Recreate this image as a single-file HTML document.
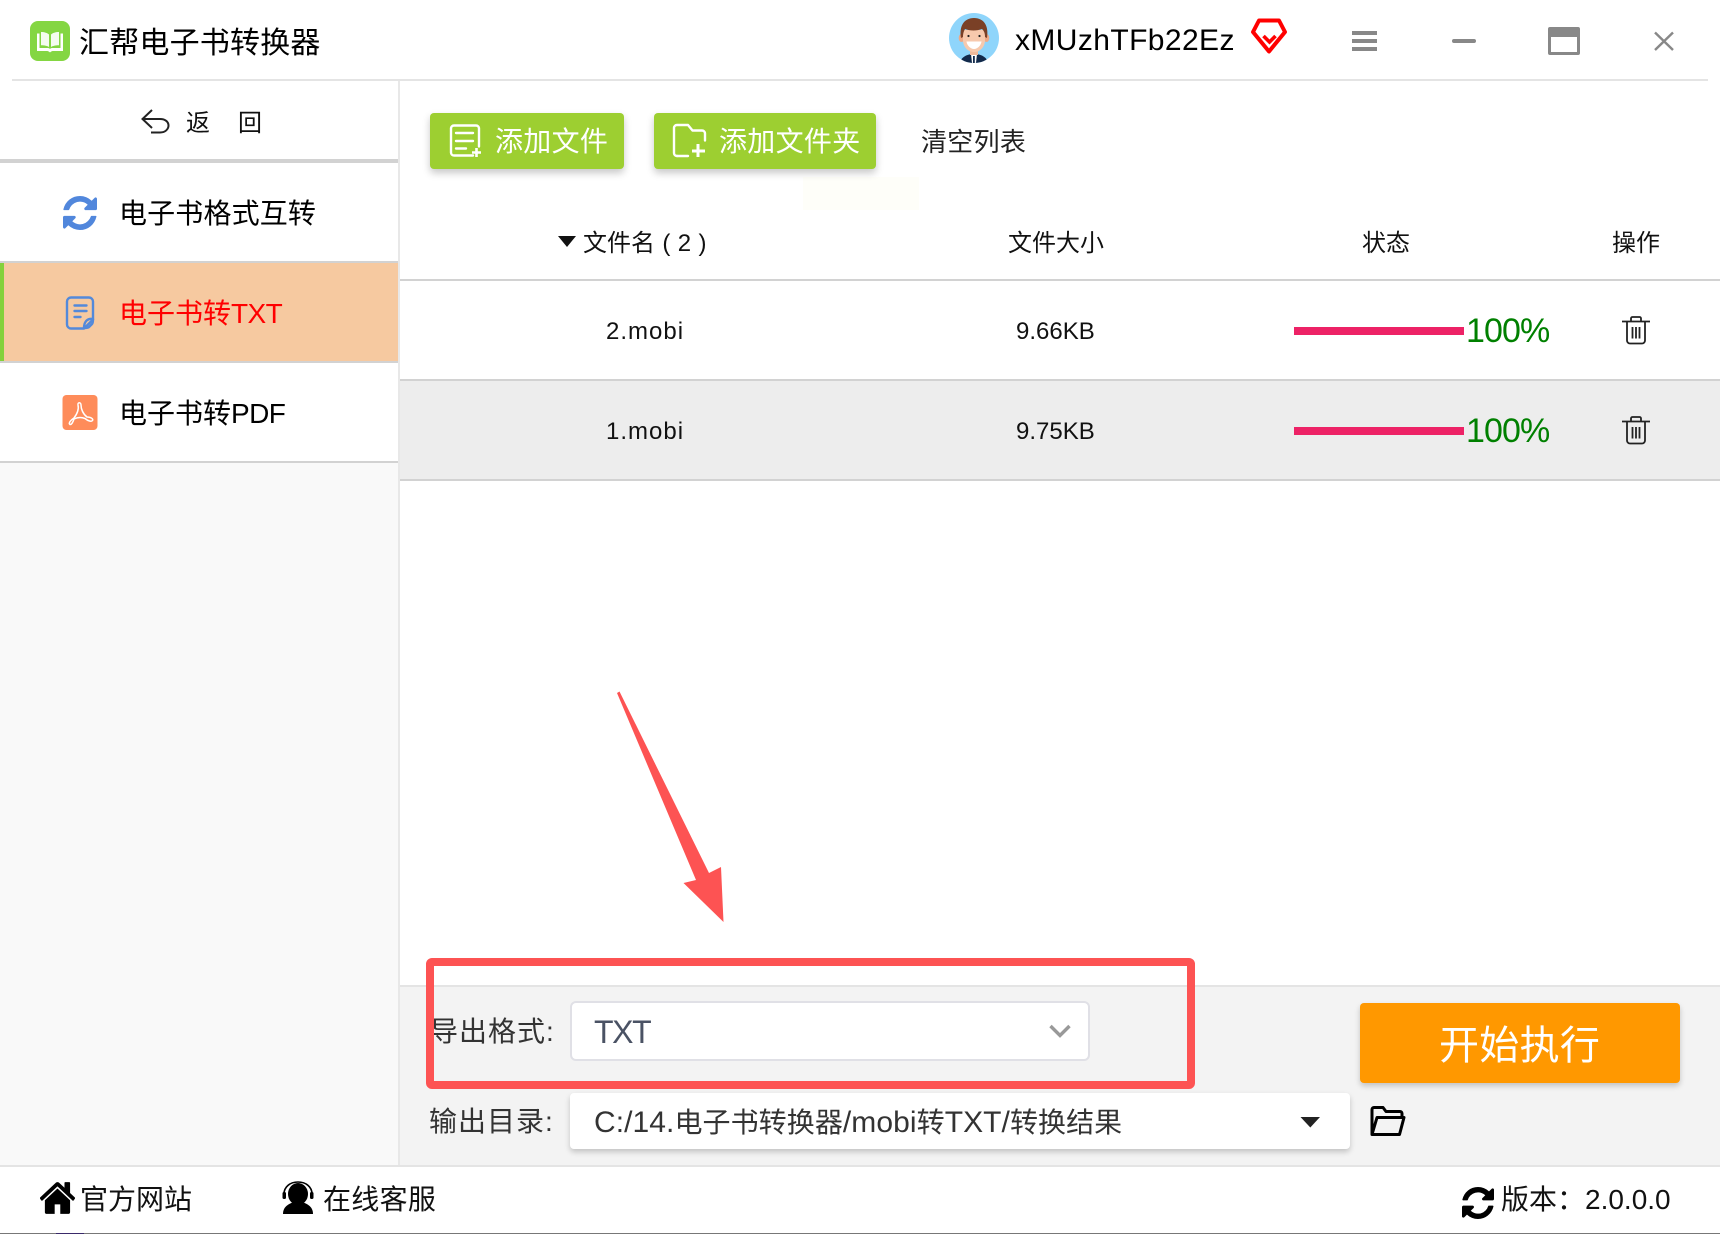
<!DOCTYPE html>
<html lang="zh-CN">
<head>
<meta charset="utf-8">
<title>汇帮电子书转换器</title>
<style>
html,body{margin:0;padding:0;width:1720px;height:1234px;overflow:hidden;background:#fff;}
body{position:relative;font-family:"Liberation Sans","Noto Sans CJK SC",sans-serif;color:#000;}
.a{position:absolute;}
.t{position:absolute;white-space:pre;height:40px;line-height:40px;}
.n{letter-spacing:-.6px}
.w{font-size:30px}
svg{position:absolute;left:0;top:0;}
</style>
</head>
<body>
<!-- backgrounds -->
<div class="a" style="left:12px;top:79px;width:1696px;height:2px;background:#e4e4e4"></div>
<div class="a" style="left:398px;top:81px;width:2px;height:1084px;background:#e8e8e8"></div>
<div class="a" style="left:0;top:463px;width:398px;height:702px;background:#f9f9f9"></div>
<div class="a" style="left:0;top:159px;width:398px;height:4px;background:#d2d2d2"></div>
<div class="a" style="left:0;top:261px;width:398px;height:2px;background:#d2d2d2"></div>
<div class="a" style="left:0;top:263px;width:398px;height:98px;background:#f6c9a0"></div>
<div class="a" style="left:0;top:263px;width:4px;height:98px;background:#84d13c"></div>
<div class="a" style="left:0;top:361px;width:398px;height:2px;background:#d2d2d2"></div>
<div class="a" style="left:0;top:461px;width:398px;height:2px;background:#d2d2d2"></div>

<div class="a" style="left:400px;top:279px;width:1320px;height:2px;background:#d2d2d2"></div>
<div class="a" style="left:400px;top:379px;width:1320px;height:2px;background:#d2d2d2"></div>
<div class="a" style="left:400px;top:381px;width:1320px;height:98px;background:#ededed"></div>
<div class="a" style="left:400px;top:479px;width:1320px;height:2px;background:#d2d2d2"></div>

<div class="a" style="left:803px;top:177px;width:116px;height:33px;background:#fefef9"></div>

<div class="a" style="left:400px;top:985px;width:1320px;height:180px;background:#f3f3f3;border-top:2px solid #e4e4e4;box-sizing:border-box"></div>
<div class="a" style="left:0;top:1165px;width:1720px;height:2px;background:#e4e4e4"></div>
<div class="a" style="left:0;top:1233px;width:1720px;height:1px;background:#777"></div>
<div class="a" style="left:56px;top:1233px;width:28px;height:1px;background:#3a2a6a"></div>

<!-- buttons -->
<div class="a" style="left:430px;top:113px;width:194px;height:56px;background:#9dcf31;border-radius:4px;box-shadow:0 4px 8px rgba(0,0,0,.22)"></div>
<div class="a" style="left:654px;top:113px;width:222px;height:56px;background:#9dcf31;border-radius:4px;box-shadow:0 4px 8px rgba(0,0,0,.22)"></div>
<div class="a" style="left:1360px;top:1003px;width:320px;height:80px;background:#ff9800;border-radius:4px;box-shadow:0 3px 6px rgba(0,0,0,.2)"></div>

<!-- selects -->
<div class="a" style="left:570px;top:1001px;width:520px;height:60px;box-sizing:border-box;background:#fff;border:2px solid #e0e0e6;border-radius:6px"></div>
<div class="a" style="left:570px;top:1093px;width:780px;height:56px;background:#fff;border-radius:4px;box-shadow:0 3px 6px rgba(0,0,0,.2)"></div>

<!-- text -->
<div class="t" style="left:79px;top:24px;font-size:30px;letter-spacing:.2px">汇帮电子书转换器</div>
<div class="t" style="left:186px;top:104px;font-size:24px;color:#111">返</div>
<div class="t" style="left:238px;top:104px;font-size:24px;color:#111">回</div>
<div class="t" style="left:1015px;top:21px;font-size:30px;letter-spacing:.4px">xMUzhTFb22Ez</div>

<div class="t" style="left:119px;top:194px;font-size:28px;letter-spacing:.15px">电子书格式互转</div>
<div class="t" style="left:119px;top:294px;font-size:28px;color:#ff0000">电子书转<span class="n">TXT</span></div>
<div class="t" style="left:119px;top:394px;font-size:28px">电子书转<span class="n">PDF</span></div>

<div class="t" style="left:495px;top:122px;font-size:28px;letter-spacing:.3px;color:#fff">添加文件</div>
<div class="t" style="left:719px;top:122px;font-size:28px;letter-spacing:.3px;color:#fff">添加文件夹</div>
<div class="t" style="left:921px;top:122px;font-size:26px;letter-spacing:.3px;color:#222">清空列表</div>

<div class="t" style="left:583px;top:224px;font-size:24px;color:#111">文件名<span style="word-spacing:.7px"> ( 2 )</span></div>
<div class="t" style="left:1008px;top:224px;font-size:24px;color:#111">文件大小</div>
<div class="t" style="left:1362px;top:224px;font-size:24px;color:#111">状态</div>
<div class="t" style="left:1612px;top:224px;font-size:24px;color:#111">操作</div>

<div class="t" style="left:606px;top:312px;font-size:24px;letter-spacing:1px;color:#111">2.mobi</div>
<div class="t" style="left:1016px;top:312px;font-size:24px;color:#111">9.66KB</div>
<div class="t" style="left:1466px;top:311px;font-size:34px;letter-spacing:-.9px;color:#008000">100%</div>
<div class="t" style="left:606px;top:412px;font-size:24px;letter-spacing:1px;color:#111">1.mobi</div>
<div class="t" style="left:1016px;top:412px;font-size:24px;color:#111">9.75KB</div>
<div class="t" style="left:1466px;top:411px;font-size:34px;letter-spacing:-.9px;color:#008000">100%</div>
<div class="a" style="left:1294px;top:327px;width:170px;height:8px;background:#ed2266"></div>
<div class="a" style="left:1294px;top:427px;width:170px;height:8px;background:#ed2266"></div>

<div class="t" style="left:430px;top:1012px;font-size:28px;letter-spacing:1px;color:#333">导出格式:</div>
<div class="t" style="left:429px;top:1102px;font-size:28px;letter-spacing:1px;color:#333">输出目录:</div>
<div class="t" style="left:594px;top:1012px;font-size:32px;letter-spacing:-1.400px;color:#4a5264">TXT</div>
<div class="t" style="left:594px;top:1103px;font-size:28px;letter-spacing:.07px;color:#333"><span class="w">C:/14.</span>电子书转换器<span class="w">/mobi</span>转<span class="w">TXT/</span>转换结果</div>
<div class="t" style="left:1439px;top:1026px;font-size:40px;letter-spacing:.3px;color:#fff">开始执行</div>

<div class="t" style="left:80px;top:1180px;font-size:28px;color:#111">官方网站</div>
<div class="t" style="left:323px;top:1180px;font-size:28px;letter-spacing:.3px;color:#111">在线客服</div>
<div class="t" style="left:1501px;top:1180px;font-size:28px;color:#111">版本：2.0.0.0</div>

<!-- overlay graphics -->
<svg width="1720" height="1234" viewBox="0 0 1720 1234" xmlns="http://www.w3.org/2000/svg">
  <!-- logo -->
  <rect x="30" y="21" width="40" height="40" rx="8" fill="#84d642"/>
  <path d="M37 33.500v17.500h10c1.500 0 2.500 1 3 1.500.5-.5 1.500-1.500 3-1.500h10V33.500h-2.500V48h-8c-1 0-2 .3-2.500 1-.5-.7-1.500-1-2.500-1h-8V33.500z" fill="#fff"/>
  <path d="M41 32c3.500 0 6.500 1 8 2.500V47c-1.500-1-4.500-1.700-8-1.700zM59 32c-3.500 0-6.500 1-8 2.500V47c1.500-1 4.500-1.700 8-1.700z" fill="#fff" opacity=".92"/>

  <!-- back arrow -->
  <path d="M152 110l-9.500 9 9.500 9M143 119h17c5.500 0 8.500 3 8.500 6.500s-3 7-8.500 7h-9" fill="none" stroke="#222" stroke-width="2"/>

  <!-- avatar -->
  <clipPath id="av"><ellipse cx="974" cy="38" rx="25" ry="25"/></clipPath>
  <g clip-path="url(#av)">
    <rect x="949" y="13" width="50" height="50" fill="#8fd5fb"/>
    <path d="M960 64c0-6 6-10 14-10s14 4 14 10z" fill="#12294a"/>
    <path d="M971 54h6l-1 9h-4z" fill="#fff"/>
    <rect x="973" y="56" width="1.800" height="7" fill="#12294a"/>
    <rect x="970" y="46" width="8" height="9" fill="#f0b99a"/>
    <ellipse cx="961.500" cy="38" rx="2.800" ry="4" fill="#eea987"/>
    <ellipse cx="986.500" cy="38" rx="2.800" ry="4" fill="#eea987"/>
    <path d="M963 30h22v10c0 7-5 12-11 12s-11-5-11-12z" fill="#f7c9ad"/>
    <path d="M961 38c-2-12 3-20 13-20s15 8 13 20l-2-1c0-4-1-6-3-8-5 2-12 2-17 0-1 2-2 4-2 8z" fill="#7a4026"/>
    <circle cx="968.500" cy="36" r="1.100" fill="#222"/>
    <circle cx="979.500" cy="36" r="1.100" fill="#222"/>
    <path d="M966.500 41.500h15c-.5 4-4 7.500-7.500 7.500s-7-3.500-7.500-7.500z" fill="#fff"/>
  </g>

  <!-- diamond -->
  <path d="M1259 20.500h20l6 11.500-16 19.500-16-19.500z" fill="none" stroke="#f00" stroke-width="4" stroke-linejoin="round"/>
  <path d="M1263.500 36l6 6 6-6" fill="none" stroke="#f00" stroke-width="3.600"/>

  <!-- window controls -->
  <g fill="#888">
    <rect x="1352" y="31" width="25" height="4"/>
    <rect x="1352" y="39" width="25" height="4"/>
    <rect x="1352" y="47" width="25" height="4"/>
    <rect x="1452" y="39" width="24" height="4" rx="2"/>
    <path d="M1550 27h28a2 2 0 0 1 2 2v24a2 2 0 0 1-2 2h-28a2 2 0 0 1-2-2V29a2 2 0 0 1 2-2zm1 10v15h26V37z" fill-rule="evenodd"/>
  </g>
  <path d="M1655 32.500l18 17.500M1673 32.500l-18 17.500" stroke="#888" stroke-width="2.400" fill="none"/>

  <!-- sidebar icons -->
  <svg x="63" y="196" width="34" height="34" viewBox="128 128 1536 1536">
    <path fill="#5187dc" d="M1639 1056q0 5-1 7-64 268-268 434.500t-478 166.500q-146 0-282.500-55t-243.500-157l-129 129q-19 19-45 19t-45-19-19-45v-448q0-26 19-45t45-19h448q26 0 45 19t19 45-19 45l-137 137q71 66 161 102t187 36q134 0 250-65t186-179q11-17 53-117 8-23 30-23h192q13 0 22.500 9.500t9.500 22.500zm25-800v448q0 26-19 45t-45 19h-448q-26 0-45-19t-19-45 19-45l138-138q-148-137-349-137-134 0-250 65t-186 179q-11 17-53 117-8 23-30 23h-199q-13 0-22.500-9.500t-9.500-22.500v-7q65-268 270-434.500t480-166.500q146 0 284 55.500t245 156.500l130-129q19-19 45-19t45 19 19 45z"/>
  </svg>
  <g fill="none" stroke="#5389da" stroke-width="2.400" stroke-linecap="round" stroke-linejoin="round">
    <path d="M71 297.500h18a4 4 0 0 1 4 4v18l-9 9H71a4 4 0 0 1-4-4v-23a4 4 0 0 1 4-4z"/>
    <path d="M93 319c-5-1-9 2-9 9 2 0 4 0 5-1l3-3c1-1 1-3 1-5z"/>
    <path d="M74.500 305.500h12M74.500 311h12M74.500 317h6"/>
  </g>
  <rect x="62.500" y="395" width="35" height="35" rx="4" fill="#fe8c5a"/>
  <path d="M70 424.500C68 423 71 420 74 418C77 414 79 409 78 405C77.500 402 81 402 81 405C81 409 83 414 87 417C91 417 93.500 419 92.500 420.500C91.500 422 88 421 85 418.500C80 416.500 76 418 74 419C73 422 71.500 425 70 424.500Z" fill="none" stroke="#fff" stroke-width="1.500" stroke-linejoin="round"/>

  <!-- toolbar icons -->
  <g fill="none" stroke="#fff" stroke-width="2.400" stroke-linecap="round" stroke-linejoin="round">
    <path d="M473 155.500h-19a3 3 0 0 1-3-3V128.500a3 3 0 0 1 3-3h22a3 3 0 0 1 3 3v18"/>
    <path d="M456 133h17M456 141h17M456 148.500h10"/>
    <path d="M677 156a3 3 0 0 1-3-3v-25a3 3 0 0 1 3-3h11l4.500 5.500H702a3 3 0 0 1 3 3v7"/>
    <path d="M677 156h11"/>
  </g>
  <path d="M472 152.500h9M476.500 148v9" stroke="#fff" stroke-width="2.600"/>
  <path d="M692 151h13M698 144v13" stroke="#fff" stroke-width="3"/>

  <!-- sort triangle -->
  <path d="M558 236h18l-9 11z" fill="#111"/>

  <!-- trash -->
  <g fill="none" stroke="#222" stroke-width="1.800" stroke-linejoin="round">
    <g id="tr">
      <path d="M1622 321.500h28"/>
      <path d="M1631 321v-2.500a1.500 1.500 0 0 1 1.500-1.500h7a1.500 1.500 0 0 1 1.500 1.500v2.500"/>
      <path d="M1627 322v18.500a3 3 0 0 0 3 3h12a3 3 0 0 0 3-3V322"/>
      <path d="M1632.500 327v11.500M1636 327v11.500M1639.500 327v11.500"/>
    </g>
    <use href="#tr" y="100"/>
  </g>

  <!-- chevron -->
  <path d="M1050.500 1026l9.500 9.500 9.500-9.500" fill="none" stroke="#999" stroke-width="3.400"/>
  <!-- path triangle -->
  <path d="M1300.500 1117h19.500l-9.700 10.500z" fill="#222"/>

  <!-- folder -->
  <path d="M1372 1134.500v-25a2 2 0 0 1 2-2h9l3 4h14a2 2 0 0 1 2 2v4M1372 1134.500l5-17h27l-4.500 17z" fill="none" stroke="#000" stroke-width="3" stroke-linejoin="round"/>

  <!-- footer icons -->
  <svg x="40" y="1179" width="35" height="38" viewBox="97 128 1600 1536" preserveAspectRatio="none">
    <path fill="#000" d="M1472 992v480q0 26-19 45t-45 19h-384v-384h-256v384h-384q-26 0-45-19t-19-45v-480q0-1 .5-3t.5-3l575-474 575 474q1 2 1 6zm223-69l-62 74q-8 9-21 11h-3q-13 0-21-7l-692-577-692 577q-12 8-24 7-13-2-21-11l-62-74q-8-10-7-23.500t11-21.500l719-599q32-26 76-26t76 26l244 204v-195q0-14 9-23t23-9h192q14 0 23 9t9 23v408l219 182q10 8 11 21.500t-7 23.500z"/>
  </svg>
  <path d="M283 1214c0-7 5-10 11-12h8c6 2 11 5 11 12z" fill="#000"/>
  <ellipse cx="298" cy="1194" rx="10" ry="11" fill="#000"/>
  <path d="M284 1197v-3c0-7 6-12 14-12s14 5 14 12v3" fill="none" stroke="#000" stroke-width="1.600"/>
  <rect x="282.500" y="1192" width="3.500" height="7" rx="1.500" fill="#000"/>
  <rect x="310" y="1192" width="3.500" height="7" rx="1.500" fill="#000"/>
  <svg x="1462" y="1187" width="32" height="32" viewBox="128 128 1536 1536">
    <path fill="#000" d="M1639 1056q0 5-1 7-64 268-268 434.500t-478 166.500q-146 0-282.500-55t-243.500-157l-129 129q-19 19-45 19t-45-19-19-45v-448q0-26 19-45t45-19h448q26 0 45 19t19 45-19 45l-137 137q71 66 161 102t187 36q134 0 250-65t186-179q11-17 53-117 8-23 30-23h192q13 0 22.500 9.500t9.500 22.500zm25-800v448q0 26-19 45t-45 19h-448q-26 0-45-19t-19-45 19-45l138-138q-148-137-349-137-134 0-250 65t-186 179q-11 17-53 117-8 23-30 23h-199q-13 0-22.500-9.500t-9.500-22.500v-7q65-268 270-434.500t480-166.500q146 0 284 55.500t245 156.500l130-129q19-19 45-19t45 19 19 45z"/>
  </svg>

  <!-- red annotation -->
  <path d="M617 693l2.500-1.500 89.500 181.500 12-6 2.500 55-40-39 12.500-3z" fill="#fd5353"/>
  <rect x="430" y="962" width="761" height="123" rx="2" fill="none" stroke="#fd5353" stroke-width="8"/>
</svg>
</body>
</html>
